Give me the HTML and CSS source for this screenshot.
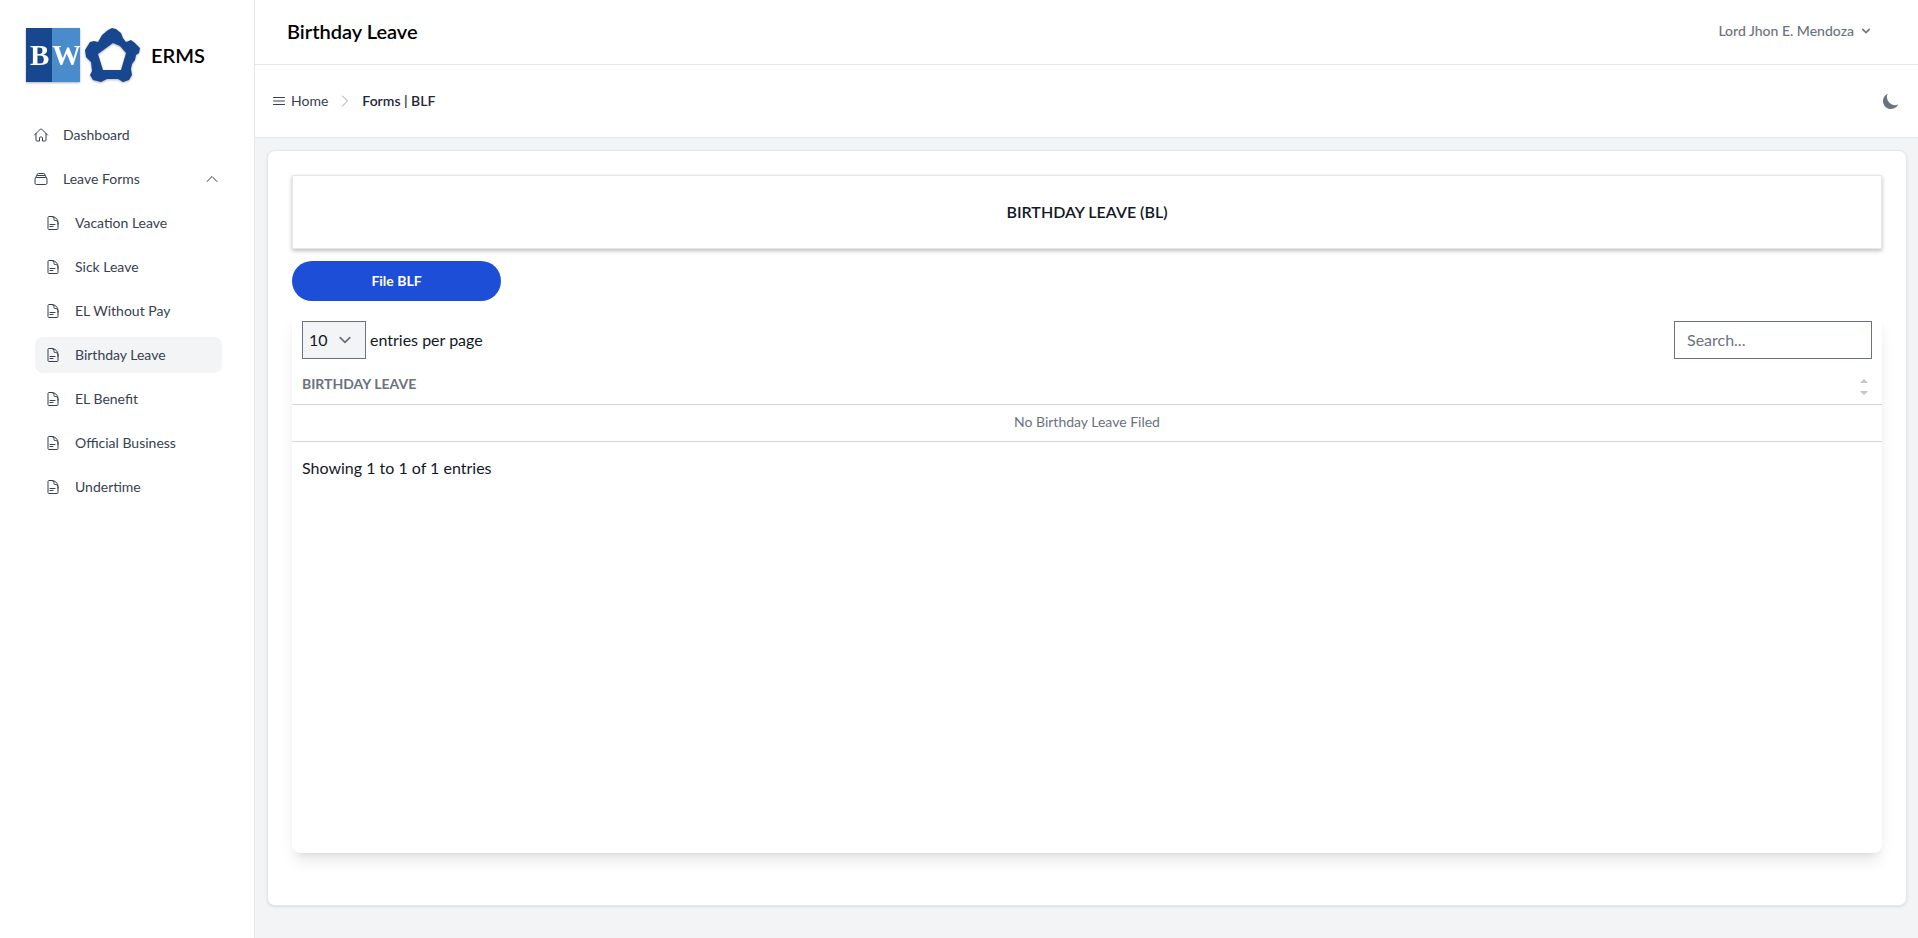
FILE: index.html
```html
<!DOCTYPE html>
<html lang="en">

<head>
    <meta charset="UTF-8">
    <meta name="viewport" content="width=device-width, initial-scale=1.0">
    <title>ERMS</title>
    <link rel="stylesheet" href="styles.css">
</head>

<body>
    <svg class="sprite" aria-hidden="true">
        <symbol id="icon-doc" viewBox="0 0 24 24">
            <path d="M19.5 14.25v-2.625a3.375 3.375 0 0 0-3.375-3.375h-1.5A1.125 1.125 0 0 1 13.5 7.125v-1.5a3.375 3.375 0 0 0-3.375-3.375H8.25m-.75 12h7.5m-7.5 3H12M10.5 2.25H5.625c-.621 0-1.125.504-1.125 1.125v17.25c0 .621.504 1.125 1.125 1.125h12.75c.621 0 1.125-.504 1.125-1.125V11.25a9 9 0 0 0-9-9Z" />
        </symbol>
    </svg>
    <div class="layout">
        <aside class="sidebar">
            <a class="brand" href="#">
                <svg class="logo" viewBox="0 0 116 58">
                    <rect x="1" y="2" width="26" height="54" fill="#17478f" />
                    <rect x="27" y="2" width="28" height="54" fill="#4a8ccb" />
                    <text class="logo-text" x="5" y="39">B</text>
                    <text class="logo-text" x="27" y="39">W</text>
                    <path fill="#17478f" fill-rule="evenodd" d="M83 4L87 2L91 3L96 7L98 12L101 16L106 14L110 17L115 22L114 27L111 29L110 34L107 38L106 43L107 49L104 54L98 56L93 53L82 53L76 56L68 54L65 49L67 45L66 36L61 31L60 24L65 16L69 15L73 16L77 9ZM88 17L73 28L78 44L96 44L101 27L95 20Z" />
                </svg>
                <span>ERMS</span>
            </a>
            <nav class="menu">
                <a class="menu-link" href="#">
                    <svg class="icon" viewBox="0 0 24 24"><path d="m2.25 12 8.954-8.955c.44-.439 1.152-.439 1.591 0L21.75 12M4.5 9.75v10.125c0 .621.504 1.125 1.125 1.125H9.75v-4.875c0-.621.504-1.125 1.125-1.125h2.25c.621 0 1.125.504 1.125 1.125V21h4.125c.621 0 1.125-.504 1.125-1.125V9.75" /></svg>
                    Dashboard
                </a>
                <button class="menu-link" type="button" aria-expanded="true">
                    <svg class="icon" viewBox="0 0 24 24"><path d="M6 6.878V6a2.25 2.25 0 0 1 2.25-2.25h7.5A2.25 2.25 0 0 1 18 6v.878m-12 0c.235-.083.487-.128.75-.128h10.5c.263 0 .515.045.75.128m-12 0A2.25 2.25 0 0 0 4.5 9v.878m13.5-3A2.25 2.25 0 0 1 19.5 9v.878m0 0a2.246 2.246 0 0 0-.75-.128H5.25c-.263 0-.515.045-.75.128m15 0A2.25 2.25 0 0 1 21 12v6a2.25 2.25 0 0 1-2.25 2.25H5.25A2.25 2.25 0 0 1 3 18v-6c0-.98.626-1.813 1.5-2.122" /></svg>
                    Leave Forms
                    <svg class="icon caret" viewBox="0 0 24 24"><path d="m4.5 15.75 7.5-7.5 7.5 7.5" /></svg>
                </button>
                <div class="submenu">
                    <a class="menu-link" href="#"><svg class="icon"><use href="#icon-doc" /></svg>Vacation Leave</a>
                    <a class="menu-link" href="#"><svg class="icon"><use href="#icon-doc" /></svg>Sick Leave</a>
                    <a class="menu-link" href="#"><svg class="icon"><use href="#icon-doc" /></svg>EL Without Pay</a>
                    <a class="menu-link active" href="#"><svg class="icon"><use href="#icon-doc" /></svg>Birthday Leave</a>
                    <a class="menu-link" href="#"><svg class="icon"><use href="#icon-doc" /></svg>EL Benefit</a>
                    <a class="menu-link" href="#"><svg class="icon"><use href="#icon-doc" /></svg>Official Business</a>
                    <a class="menu-link" href="#"><svg class="icon"><use href="#icon-doc" /></svg>Undertime</a>
                </div>
            </nav>
        </aside>
        <div class="page">
            <header class="topbar">
                <h1>Birthday Leave</h1>
                <button class="user" type="button">
                    Lord Jhon E. Mendoza
                    <svg class="user-caret" viewBox="0 0 20 20"><path d="M5.293 7.293a1 1 0 0 1 1.414 0L10 10.586l3.293-3.293a1 1 0 1 1 1.414 1.414l-4 4a1 1 0 0 1-1.414 0l-4-4a1 1 0 0 1 0-1.414z" /></svg>
                </button>
            </header>
            <div class="crumbbar">
                <nav class="crumbs" aria-label="Breadcrumb">
                    <a class="crumb" href="#">
                        <svg class="icon" viewBox="0 0 24 24"><path d="M3.75 6.75h16.5M3.75 12h16.5m-16.5 5.25h16.5" /></svg>
                        Home
                    </a>
                    <svg class="icon crumb-sep" viewBox="0 0 24 24"><path d="m8.25 4.5 7.5 7.5-7.5 7.5" /></svg>
                    <span class="crumb-current">Forms | BLF</span>
                </nav>
                <button class="theme" type="button" aria-label="Toggle dark mode">
                    <svg viewBox="0 0 20 20"><path d="M17.293 13.293A8 8 0 0 1 6.707 2.707a8.001 8.001 0 1 0 10.586 10.586z" /></svg>
                </button>
            </div>
            <main class="card">
                <h2 class="card-title">BIRTHDAY LEAVE (BL)</h2>
                <button class="file-btn" type="button">File BLF</button>
                <section class="table-box">
                    <div class="table-top">
                        <div class="per-page">
                            <span class="select-wrap">
                                <select id="perPage">
                                    <option>5</option>
                                    <option selected>10</option>
                                    <option>15</option>
                                    <option>20</option>
                                    <option>25</option>
                                </select>
                                <svg class="select-caret" viewBox="0 0 20 20"><path d="m6 8 4 4 4-4" /></svg>
                            </span>
                            <label for="perPage">entries per page</label>
                        </div>
                        <input class="search" type="search" placeholder="Search..." aria-label="Search">
                    </div>
                    <table>
                        <thead>
                            <tr>
                                <th>
                                    <button class="sorter" type="button">
                                        BIRTHDAY LEAVE
                                        <svg class="sort-icon" viewBox="0 0 8 16"><path d="M0 4l4-4 4 4zM0 12l4 4 4-4z" /></svg>
                                    </button>
                                </th>
                            </tr>
                        </thead>
                        <tbody>
                            <tr>
                                <td>No Birthday Leave Filed</td>
                            </tr>
                        </tbody>
                    </table>
                    <p class="info">Showing 1 to 1 of 1 entries</p>
                </section>
            </main>
        </div>
    </div>
</body>

</html>
```
FILE: styles.css
```css
* {
    margin: 0;
    padding: 0;
    box-sizing: border-box;
}

body {
    font-family: Lato, "Open Sans", sans-serif;
    font-size: 16px;
    line-height: 24px;
    color: #111827;
    background-color: #f3f4f6;
}

a {
    color: inherit;
    text-decoration: none;
}

button,
input,
select {
    font: inherit;
    color: inherit;
    border: 0;
    background: none;
}

button {
    cursor: pointer;
}

.sprite {
    display: none;
}

.layout {
    display: flex;
    min-height: 100vh;
}

/* sidebar */
.sidebar {
    flex: none;
    width: 255px;
    padding: 26px 32px 24px 23px;
    background-color: #fff;
    border-right: 1px solid #e5e7eb;
}

.brand {
    display: flex;
    align-items: center;
    gap: 10px;
    margin-bottom: 33px;
    padding-left: 2px;
    font-size: 20px;
    font-weight: 600;
    color: #000;
}

.logo {
    width: 116px;
    height: 58px;
    filter: drop-shadow(0 1px 1px rgba(0, 0, 0, .3));
}

.logo-text {
    font-family: "Liberation Serif", serif;
    font-size: 29px;
    font-weight: bold;
    fill: #fff;
}

.menu,
.submenu {
    display: flex;
    flex-direction: column;
    gap: 8px;
}

.submenu {
    padding-left: 12px;
}

.menu-link {
    display: flex;
    align-items: center;
    gap: 14px;
    height: 36px;
    padding: 0 10px;
    border-radius: 8px;
    font-size: 14px;
    color: #374151;
}

.menu-link.active {
    background-color: #f3f4f6;
}

.icon {
    flex: none;
    width: 16px;
    height: 16px;
    fill: none;
    stroke: currentColor;
    stroke-width: 1.5;
    stroke-linecap: round;
    stroke-linejoin: round;
}

.caret {
    margin-left: auto;
    margin-right: -8px;
}

/* header */
.page {
    flex: 1;
    min-width: 0;
}

.topbar {
    display: flex;
    align-items: center;
    justify-content: space-between;
    height: 65px;
    padding: 0 44px 3px 32px;
    background-color: #fff;
    border-bottom: 1px solid #e5e7eb;
}

h1 {
    font-size: 20px;
    font-weight: 600;
    color: #000;
}

.user {
    display: flex;
    align-items: center;
    gap: 4px;
    font-size: 14px;
    font-weight: 500;
    color: #6b7280;
}

.user-caret {
    width: 16px;
    height: 16px;
    fill: currentColor;
}

.crumbbar {
    display: flex;
    align-items: center;
    justify-content: space-between;
    height: 73px;
    padding: 0 17px 0 16px;
    background-color: #fff;
    border-bottom: 1px solid #e5e7eb;
}

.crumbs,
.crumb {
    display: flex;
    align-items: center;
    gap: 4px;
    font-size: 14px;
    color: #374151;
}

.crumbs {
    gap: 9px;
}

.crumb-sep {
    color: #9ca3af;
}

.crumb-current {
    font-weight: 600;
    color: #1f2937;
}

.theme svg {
    display: block;
    width: 20px;
    height: 20px;
    fill: #6b7280;
}

/* content */
.card {
    min-height: 756px;
    margin: 12px 11px 32px 12px;
    padding: 24px;
    background-color: #fff;
    border: 1px solid #e5e7eb;
    border-radius: 8px;
    box-shadow: 0 1px 3px rgba(0, 0, 0, .1);
}

.card-title {
    padding: 24px;
    border: 1px solid #e5e7eb;
    box-shadow: 0 2px 4px rgba(0, 0, 0, .25);
    text-align: center;
    font-size: 16px;
    font-weight: 600;
}

.file-btn {
    display: block;
    width: 209px;
    height: 40px;
    margin: 12px 0;
    border-radius: 20px;
    background-color: #1d4ed8;
    color: #fff;
    font-size: 14px;
    font-weight: 700;
}

.table-box {
    min-height: 540px;
    padding-top: 8px;
    background-color: #fff;
    border-radius: 8px;
    box-shadow: 0 10px 15px -3px rgba(0, 0, 0, .1), 0 4px 6px -4px rgba(0, 0, 0, .1);
}

.table-top {
    display: flex;
    align-items: center;
    justify-content: space-between;
    padding: 0 10px;
}

.per-page {
    display: flex;
    align-items: center;
    gap: 4px;
}

.select-wrap {
    position: relative;
}

select {
    display: block;
    width: 64px;
    height: 38px;
    padding-left: 6px;
    border: 1px solid #6b7280;
    background-color: #f3f4f6;
    appearance: none;
}

.select-caret {
    position: absolute;
    top: 7px;
    right: 9px;
    width: 24px;
    height: 24px;
    fill: none;
    stroke: #6b7280;
    stroke-width: 1.5;
    stroke-linecap: round;
    stroke-linejoin: round;
    pointer-events: none;
}

.search {
    width: 198px;
    height: 38px;
    padding: 0 12px 2px;
    border: 1px solid #6b7280;
    appearance: none;
}

.search::placeholder {
    color: #6b7280;
}

table {
    width: 100%;
    border-collapse: collapse;
    font-size: 14px;
    color: #6b7280;
}

th,
td {
    height: 37px;
    padding-bottom: 2px;
    border-bottom: 1px solid #d5d5d5;
    text-align: center;
}

th {
    height: 45px;
    padding: 13px 14px 0 10px;
    vertical-align: top;
}

.sorter {
    display: flex;
    align-items: flex-start;
    justify-content: space-between;
    width: 100%;
    font-weight: 700;
}

.sort-icon {
    width: 8px;
    height: 16px;
    margin-top: 7px;
    fill: #c4c4c4;
}

.info {
    padding: 14px 10px;
}
```
